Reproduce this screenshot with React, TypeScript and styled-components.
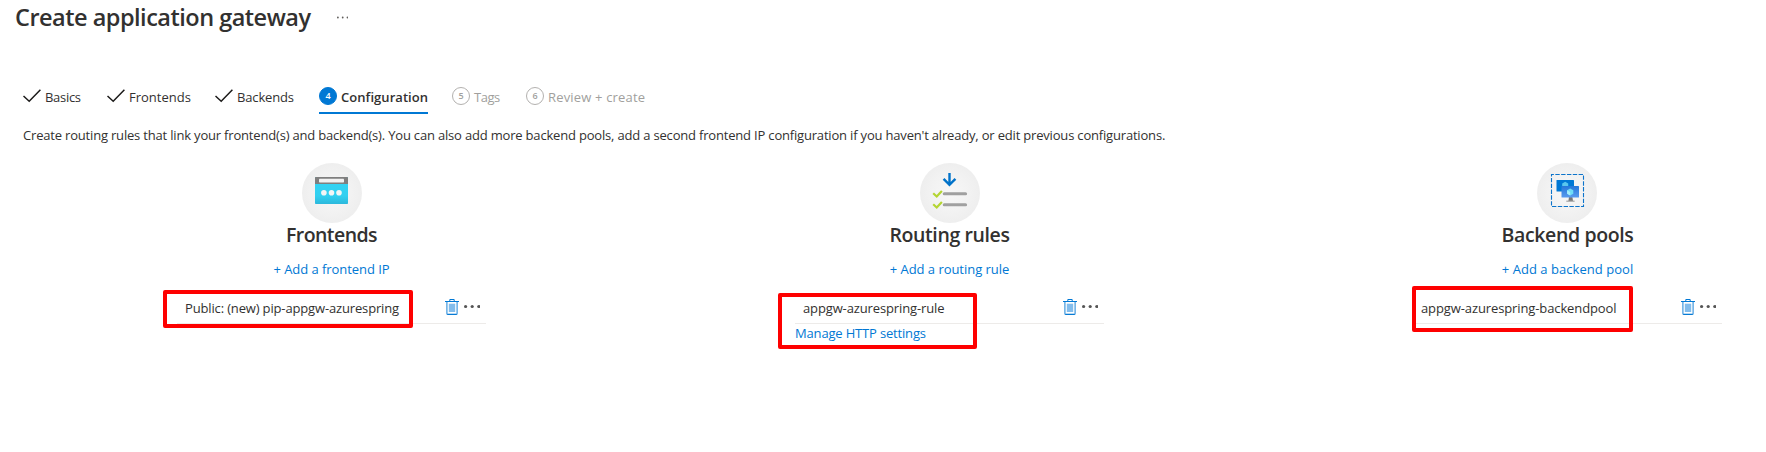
import React from "react";
import styled, { createGlobalStyle } from "styled-components";

const GlobalStyle = createGlobalStyle`
  * { box-sizing: border-box; }
  body {
    margin: 0;
    background: #fff;
    color: #323130;
    font: 13px/20px "Open Sans", "Noto Sans", sans-serif;
    overflow: hidden;
  }
  svg { display: block; flex: none; }
`;

const Page = styled.main`
  height: 452px;
  padding-top: 1px;
`;

const Header = styled.header`
  display: flex;
  align-items: center;
  height: 32px;
  padding-left: 15px;
`;

const Title = styled.h1`
  margin: 0;
  width: 322px;
  font-size: 23.5px;
  line-height: 32px;
  font-weight: 600;
  letter-spacing: -0.5px;
  white-space: nowrap;
`;

const Tabs = styled.nav`
  display: flex;
  margin-top: 52px;
  padding-left: 23px;
  height: 29px;
`;

const Tab = styled.div<{ $width: number; $gap: number; $spacing: number; $state: "done" | "active" | "todo" }>`
  display: flex;
  align-items: flex-start;
  width: ${(p) => p.$width}px;
  margin-right: ${(p) => p.$gap}px;
  border-bottom: 2px solid ${(p) => (p.$state === "active" ? "#0078d4" : "transparent")};
  color: ${(p) => (p.$state === "todo" ? "#a19f9d" : "#323130")};
  font-weight: ${(p) => (p.$state === "active" ? 600 : 400)};
  letter-spacing: ${(p) => p.$spacing}px;
  white-space: nowrap;
`;

const TabLabel = styled.span`
  padding-top: 2px;
  margin-left: 4px;
`;

const StepNumber = styled.span<{ $active: boolean }>`
  flex: none;
  width: 18px;
  height: 18px;
  margin-top: 2px;
  border: 1px solid ${(p) => (p.$active ? "#0078d4" : "#b3b1af")};
  border-radius: 50%;
  background: ${(p) => (p.$active ? "#0078d4" : "#fff")};
  color: ${(p) => (p.$active ? "#fff" : "#a19f9d")};
  font-size: 9px;
  line-height: 16px;
  font-weight: 600;
  letter-spacing: 0;
  text-align: center;
`;

const Description = styled.p`
  margin: 11px 0 18px 23px;
  letter-spacing: -0.185px;
  white-space: nowrap;
`;

const Columns = styled.div`
  display: grid;
  grid-template-columns: repeat(3, 309px);
  column-gap: 309px;
  padding-left: 177px;
`;

const Column = styled.section`
  position: relative;
  display: flex;
  flex-direction: column;
  align-items: center;
`;

const IconCircle = styled.div<{ $nudge?: number }>`
  width: 60px;
  height: 60px;
  margin-left: ${(p) => p.$nudge ?? 1}px;
  border-radius: 50%;
  background: radial-gradient(circle, #f7f7f7 0%, #f2f2f2 45%, #eaeaea 100%);
`;

const Heading = styled.h2<{ $spacing: number }>`
  margin: -1px 0 0;
  font-size: 19.5px;
  line-height: 26px;
  font-weight: 600;
  letter-spacing: ${(p) => p.$spacing}px;
`;

const Link = styled.a<{ $spacing: number }>`
  color: #0078d4;
  letter-spacing: ${(p) => p.$spacing}px;
  white-space: nowrap;
`;

const AddLink = styled(Link)`
  margin-top: 11px;
`;

const ManageLink = styled(Link)`
  align-self: flex-start;
  margin-top: -1px;
`;

const Row = styled.div`
  display: flex;
  align-items: flex-start;
  width: 309px;
  height: 26px;
  margin-top: 19px;
  padding: 0 5.6px 0 8px;
  border-bottom: 1px solid #edebe9;
`;

const RowName = styled.span<{ $spacing: number }>`
  flex: 1;
  letter-spacing: ${(p) => p.$spacing}px;
  white-space: nowrap;
`;

const RowActions = styled.div`
  display: flex;
  gap: 5px;
`;

const Highlight = styled.div<{ $x: number; $y: number; $w: number; $h: number }>`
  position: absolute;
  left: ${(p) => p.$x}px;
  top: ${(p) => p.$y}px;
  width: ${(p) => p.$w}px;
  height: ${(p) => p.$h}px;
  border: 4px solid #fe0000;
  border-radius: 2px;
`;

const Check = () => (
  <svg width="18" height="20" viewBox="0 0 18 20">
    <path d="M.5 11 6.2 16.2 17.4 4.8" fill="none" stroke="#1b1a19" strokeWidth="1.5" />
  </svg>
);

const Dots = ({ size, step, cy, color }: { size: number; step: number; cy: number; color: string }) => (
  <svg width={step * 2 + size} height="18" viewBox={`0 0 ${step * 2 + size} 18`} fill={color}>
    {[0, 1, 2].map((i) => (
      <circle key={i} cx={size / 2 + i * step} cy={cy} r={size / 2} />
    ))}
  </svg>
);

const Trash = () => (
  <svg width="14" height="18" viewBox="0 0 14 18">
    <rect x="3.8" y="5.7" width="6.4" height="8.3" fill="#83bdec" />
    <path d="M1.9 3.5v12q0 .9.9.9h8.4q.9 0 .9-.9v-12" fill="none" stroke="#3f98de" strokeWidth="1.2" />
    <path d="M0 3.5h14M4.8 3V1.5h4.4V3M2.4 16.4h9.2" fill="none" stroke="#0078d4" strokeWidth="1" />
  </svg>
);

const FrontendIcon = () => (
  <svg width="60" height="60" viewBox="0 0 60 60">
    <defs>
      <linearGradient id="window" x1="0" y1="0" x2="0" y2="1">
        <stop offset="0" stopColor="#32d4f5" />
        <stop offset=".7" stopColor="#32d0f0" />
        <stop offset="1" stopColor="#2cb8dc" />
      </linearGradient>
    </defs>
    <rect x="13" y="14" width="33" height="27" rx=".8" fill="url(#window)" />
    <path d="M13 21v-6.2q0-.8.8-.8h31.4q.8 0 .8.8V21z" fill="#7f7f7f" />
    <rect x="17" y="15.8" width="25" height="3.7" rx=".7" fill="#f2f2f2" />
    <g fill="#f4f6f6">
      <circle cx="21.9" cy="29.7" r="2.8" />
      <circle cx="29.5" cy="29.7" r="2.8" />
      <circle cx="37" cy="29.7" r="2.8" />
    </g>
  </svg>
);

const RulesIcon = () => (
  <svg width="60" height="60" viewBox="0 0 60 60" fill="none">
    <path d="M29.5 10v12M23.6 15.9l5.9 6 5.9-6" stroke="#0072c9" strokeWidth="2.4" />
    <path d="M24.2 30.8h21.4M24.2 41.8h21.4" stroke="#a0a0a0" strokeWidth="3" strokeLinecap="round" />
    <path d="M13.2 30.3l3.5 3.2 5.2-5.6M13.2 41.3l3.5 3.2 5.2-5.6" stroke="#b4d532" strokeWidth="2.2" />
  </svg>
);

const PoolsIcon = () => (
  <svg width="60" height="60" viewBox="0 0 60 60">
    <defs>
      <linearGradient id="screen" x1="0" y1="0" x2="0" y2="1">
        <stop offset="0" stopColor="#2477da" />
        <stop offset="1" stopColor="#5a9bee" />
      </linearGradient>
    </defs>
    <rect x="14.5" y="11.5" width="32" height="32" fill="none" stroke="#0c74cb" strokeWidth="1.1" strokeDasharray="4.4 1.42" strokeDashoffset="2" />
    <rect x="19.5" y="17" width="17.5" height="11.5" rx=".6" fill="#0078d4" />
    <path d="M28.2 18.8l3 1.6v3.5l-3 1.7-3-1.7v-3.5z" fill="#59c6ee" />
    <path d="M32 34h3.4l.6 4H31.4z" fill="#777" />
    <rect x="29.3" y="37.6" width="8.3" height="1.2" fill="#a3a3a3" />
    <rect x="24.5" y="23" width="17.5" height="11.6" rx=".6" fill="url(#screen)" />
    <path d="M33.2 25.5l3.1 1.7v3.5l-3.1 1.7-3.1-1.7v-3.5z" fill="#6fdcf6" />
    <path d="M33.2 29v3.4l-3.1-1.7v-3.5z" fill="#a6eefb" />
  </svg>
);

interface RowItemProps {
  name: string;
  spacing: number;
}

const ItemRow = ({ name, spacing }: RowItemProps) => (
  <Row>
    <RowName $spacing={spacing}>{name}</RowName>
    <RowActions>
      <Trash />
      <Dots size={3.2} step={6.6} cy={8.5} color="#555" />
    </RowActions>
  </Row>
);

export default function App() {
  return (
    <Page>
      <GlobalStyle />
      <Header>
        <Title>Create application gateway</Title>
        <Dots size={1.8} step={4.8} cy={9.5} color="#605e5c" />
      </Header>
      <Tabs>
        <Tab $state="done" $width={58} $gap={26} $spacing={-0.3}><Check /><TabLabel>Basics</TabLabel></Tab>
        <Tab $state="done" $width={84} $gap={24} $spacing={0}><Check /><TabLabel>Frontends</TabLabel></Tab>
        <Tab $state="done" $width={80} $gap={24} $spacing={-0.15}><Check /><TabLabel>Backends</TabLabel></Tab>
        <Tab $state="active" $width={109} $gap={24} $spacing={0.06}><StepNumber $active>4</StepNumber><TabLabel>Configuration</TabLabel></Tab>
        <Tab $state="todo" $width={49} $gap={25} $spacing={-0.5}><StepNumber $active={false}>5</StepNumber><TabLabel>Tags</TabLabel></Tab>
        <Tab $state="todo" $width={119} $gap={0} $spacing={0.17}><StepNumber $active={false}>6</StepNumber><TabLabel>Review + create</TabLabel></Tab>
      </Tabs>
      <Description>
        Create routing rules that link your frontend(s) and backend(s). You can also add more backend pools, add a second frontend IP configuration if you haven't already, or edit previous configurations.
      </Description>
      <Columns>
        <Column>
          <IconCircle><FrontendIcon /></IconCircle>
          <Heading $spacing={-0.55}>Frontends</Heading>
          <AddLink $spacing={-0.06}>+ Add a frontend IP</AddLink>
          <ItemRow name="Public: (new) pip-appgw-azurespring" spacing={-0.15} />
          <Highlight $x={-14} $y={127} $w={250} $h={38} />
        </Column>
        <Column>
          <IconCircle><RulesIcon /></IconCircle>
          <Heading $spacing={-0.38}>Routing rules</Heading>
          <AddLink $spacing={-0.04}>+ Add a routing rule</AddLink>
          <ItemRow name="appgw-azurespring-rule" spacing={-0.13} />
          <ManageLink $spacing={-0.17}>Manage HTTP settings</ManageLink>
          <Highlight $x={-17} $y={130} $w={199} $h={56} />
        </Column>
        <Column>
          <IconCircle $nudge={-1}><PoolsIcon /></IconCircle>
          <Heading $spacing={-0.38}>Backend pools</Heading>
          <AddLink $spacing={0.04}>+ Add a backend pool</AddLink>
          <ItemRow name="appgw-azurespring-backendpool" spacing={-0.11} />
          <Highlight $x={-1} $y={123} $w={221} $h={46} />
        </Column>
      </Columns>
    </Page>
  );
}
